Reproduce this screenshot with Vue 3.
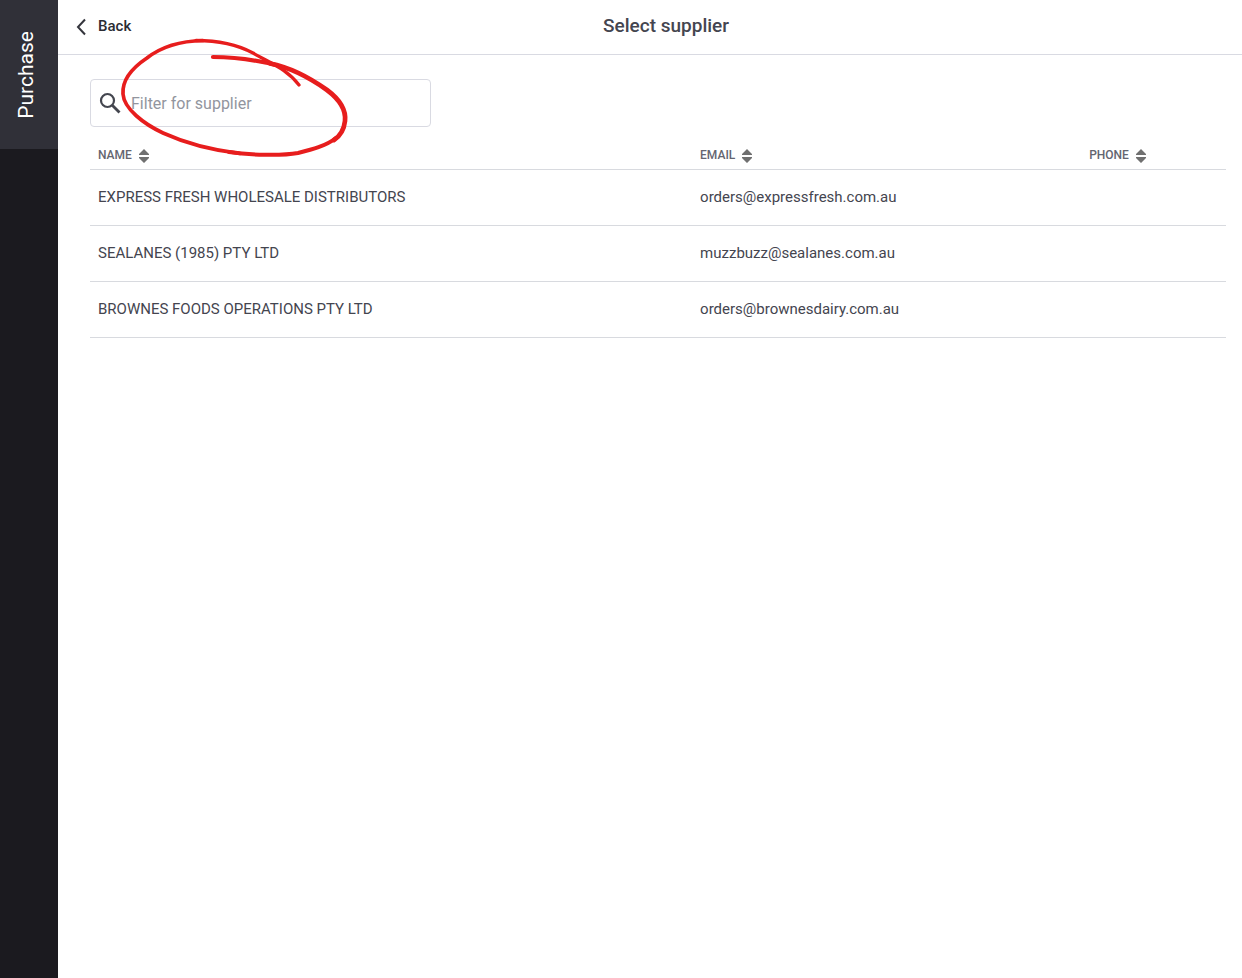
<script setup>
import { computed, ref } from 'vue'

const columns = [
  { key: 'name', label: 'NAME' },
  { key: 'email', label: 'EMAIL' },
  { key: 'phone', label: 'PHONE' },
]

const suppliers = [
  { name: 'EXPRESS FRESH WHOLESALE DISTRIBUTORS', email: 'orders@expressfresh.com.au', phone: '' },
  { name: 'SEALANES (1985) PTY LTD', email: 'muzzbuzz@sealanes.com.au', phone: '' },
  { name: 'BROWNES FOODS OPERATIONS PTY LTD', email: 'orders@brownesdairy.com.au', phone: '' },
]

const filter = ref('')
const sortKey = ref('')

const rows = computed(() => {
  const q = filter.value.toLowerCase()
  const found = suppliers.filter((s) => s.name.toLowerCase().includes(q))
  return sortKey.value
    ? found.sort((a, b) => a[sortKey.value].localeCompare(b[sortKey.value]))
    : found
})
</script>

<template>
  <div class="app">
    <nav class="rail">
      <a class="rail-tab" href="#"><span>Purchase</span></a>
    </nav>
    <div class="page">
      <header class="top">
        <button class="back" type="button">
          <svg width="12" height="18" viewBox="0 0 12 18" aria-hidden="true">
            <path d="M11 1.500 4 9l7 7.500" fill="none" stroke="#35363d" stroke-width="2" />
          </svg>
          <span>Back</span>
        </button>
        <h1>Select supplier</h1>
      </header>
      <main>
        <div class="search">
          <svg class="glass" width="22" height="22" viewBox="0 0 22 22" aria-hidden="true">
            <circle cx="8.500" cy="8.500" r="6.500" fill="none" stroke="#44464f" stroke-width="2.200" />
            <path d="m13 13 7.500 7.500" stroke="#44464f" stroke-width="2.800" />
          </svg>
          <input v-model="filter" type="text" placeholder="Filter for supplier" aria-label="Filter for supplier" />
          <svg class="mark" width="232" height="124" viewBox="118 36 232 124" aria-hidden="true">
            <path d="M213 57C236 57 256 60 276 65" stroke-width="4.200" />
            <path d="M270 63.500C293 68 313 80 327 90C343 102 346 112 345 121C344 130 340 136 334 140" stroke-width="4.700" />
            <path d="M336 138C326 146 312 149.500 298 153C281 156 249 155 229 152" stroke-width="4" />
            <path d="M240 153.500C211 150 185 143 163 133C144 124 124 109 123 94C122 80 132 68 147 58C161 47 180 41 203 40.500" stroke-width="3.700" />
            <path d="M196 40.500C217 40.500 238 45 253 53C272 64 287 69 299 85" stroke-width="3.300" />
          </svg>
        </div>
        <table>
          <thead>
            <tr>
              <th v-for="c in columns" :key="c.key" :class="c.key" scope="col">
                <button class="sort" type="button" @click="sortKey = c.key">
                  <span>{{ c.label }}</span>
                  <svg width="10" height="14" viewBox="0 0 10 14" aria-hidden="true">
                    <path d="M5 0 10 5v1H0V5zM0 8h10v1l-5 5-5-5z" fill="#707070" />
                  </svg>
                </button>
              </th>
            </tr>
          </thead>
          <tbody>
            <tr v-for="s in rows" :key="s.name">
              <td>{{ s.name }}</td>
              <td>{{ s.email }}</td>
              <td>{{ s.phone }}</td>
            </tr>
          </tbody>
        </table>
      </main>
    </div>
  </div>
</template>

<style>
body {
  margin: 0;
  background: #fff;
}
</style>

<style scoped>
.app {
  display: flex;
  min-height: 100vh;
  font-family: Roboto, "Liberation Sans", sans-serif;
  color: #44454f;
}
.rail {
  flex: 0 0 58px;
  background: #1b1a1f;
}
.rail-tab {
  display: flex;
  align-items: center;
  justify-content: center;
  height: 149px;
  padding-right: 6px;
  box-sizing: border-box;
  background: #303038;
  color: #fff;
  font-size: 21px;
  line-height: 24px;
  text-decoration: none;
}
.rail-tab span {
  writing-mode: vertical-rl;
  transform: rotate(180deg);
}
.page {
  flex: 1;
  min-width: 0;
}
.top {
  position: relative;
  display: flex;
  align-items: center;
  height: 54px;
  padding-left: 32px;
  border-bottom: 1px solid #d9dae2;
}
.top h1 {
  flex: 1;
  margin: 0;
  padding-bottom: 2px;
  text-align: center;
  font-size: 19px;
  line-height: 24px;
  font-weight: 500;
}
.back {
  position: absolute;
  left: 16px;
  display: flex;
  align-items: center;
  gap: 12px;
  padding: 0;
  border: 0;
  background: none;
  color: #2b2c33;
  font: 500 15px/20px Roboto, sans-serif;
}
.back span {
  padding-bottom: 2px;
}
main {
  padding: 24px 16px 24px 32px;
}
.search {
  position: relative;
  display: flex;
  align-items: center;
  gap: 10px;
  box-sizing: border-box;
  width: 30%;
  min-width: 240px;
  height: 48px;
  padding: 0 8px;
  border: 1px solid #d9dae2;
  border-radius: 4px;
}
.glass {
  flex: none;
}
.search input {
  flex: 1;
  min-width: 0;
  height: 40px;
  padding: 0;
  border: 0;
  outline: 0;
  background: none;
  color: #44454f;
  font: 16px/20px Roboto, sans-serif;
}
.search input::placeholder {
  color: #92959e;
  opacity: 1;
}
.mark {
  position: absolute;
  left: 27px;
  top: -44px;
  pointer-events: none;
  fill: none;
  stroke: #e71d1d;
  stroke-linecap: round;
}
table {
  width: 100%;
  margin-top: 15px;
  table-layout: fixed;
  border-collapse: collapse;
}
th,
td {
  box-sizing: border-box;
  padding: 0 8px;
  border-bottom: 1px solid #d8dadf;
  text-align: left;
}
th {
  height: 27px;
  padding-top: 2px;
}
th.name {
  width: 53%;
}
th.email {
  width: 34.25%;
}
.sort {
  display: flex;
  align-items: center;
  gap: 7px;
  padding: 0;
  border: 0;
  background: none;
  color: #646570;
  font: 500 12px/16px Roboto, sans-serif;
}
.sort span {
  padding-bottom: 2px;
}
td {
  height: 56px;
  font-size: 15px;
  line-height: 20px;
}
</style>
